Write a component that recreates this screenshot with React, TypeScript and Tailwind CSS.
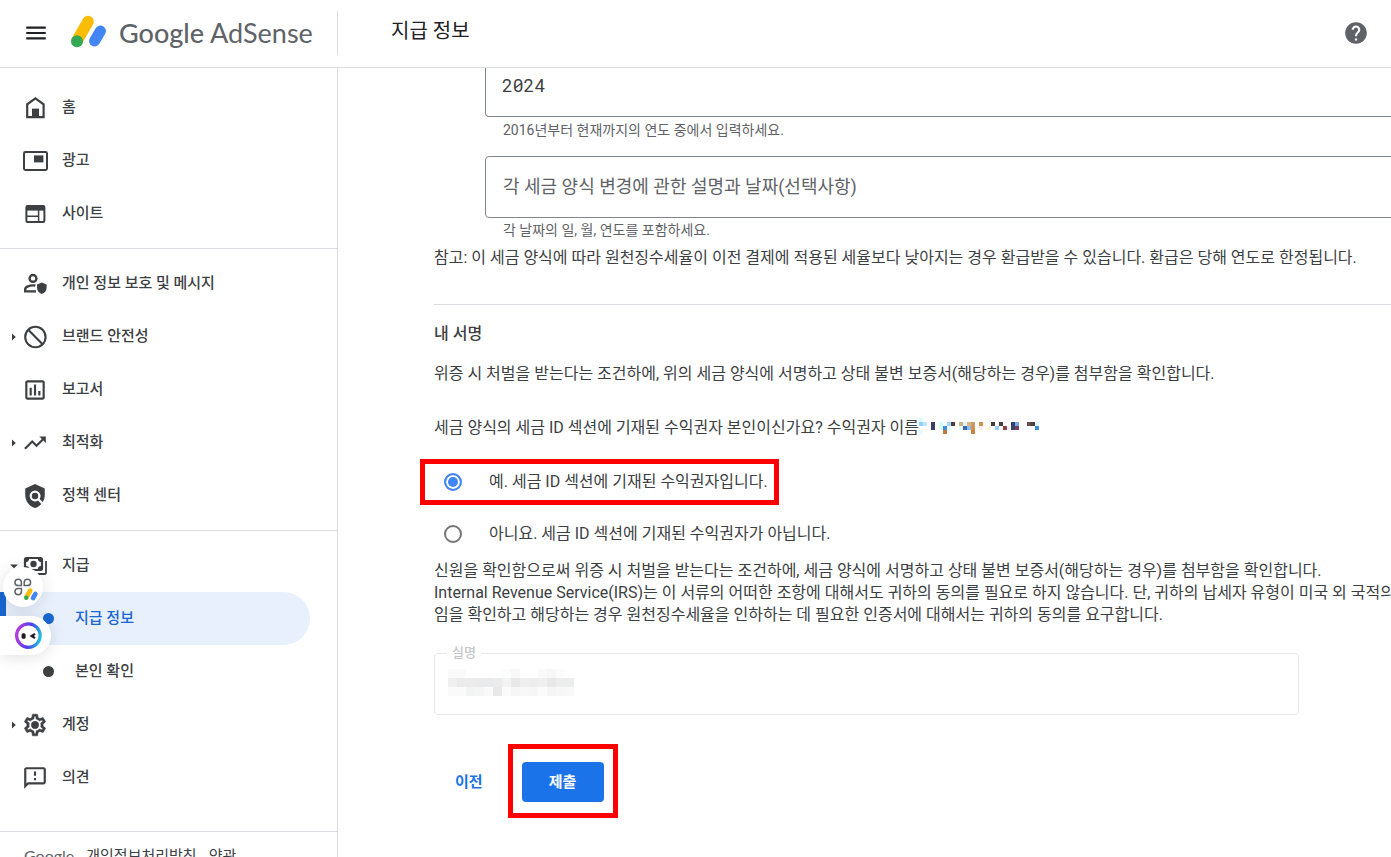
import React from 'react';
import { MdHelp, MdMenu, MdOutlineFeedback, MdOutlineInsertChart, MdPolicy, MdTrendingUp } from 'react-icons/md';

const HomeIcon = () => (
  <svg width="26" height="26" viewBox="0 0 26 26" fill="none" stroke="currentColor" strokeWidth="2.2">
    <path d="M5.2 22.2V9.4l8.2-6 8.2 6v12.8z" />
    <path d="M10 13.6h7v8.6h-7z" fill="currentColor" stroke="none" />
  </svg>
);

const AdsIcon = () => (
  <svg width="26" height="26" viewBox="0 0 26 26" fill="none" stroke="currentColor" strokeWidth="2">
    <rect x="2" y="4" width="23" height="18" rx="1.4" />
    <path d="M12 7.4h9.4v7H12z" fill="currentColor" stroke="none" />
  </svg>
);

const SitesIcon = () => (
  <svg width="26" height="26" viewBox="0 0 26 26" fill="none" stroke="currentColor" strokeWidth="2">
    <rect x="4.4" y="5" width="18" height="16" rx="1.2" />
    <path d="M4.4 5h18v4.6h-18z" fill="currentColor" stroke="none" />
    <path d="M4.4 15.2h12M16.6 9v12" strokeWidth="1.5" />
  </svg>
);

const PrivacyIcon = () => (
  <svg width="26" height="26" viewBox="0 0 26 26" fill="none" stroke="currentColor" strokeWidth="2.4">
    <circle cx="11" cy="7.4" r="3.4" />
    <path d="M14 20.4H3.2v-2.2c0-2.4 4.8-3.8 7.8-3.8 1 0 1.8.1 2.4.3" />
    <path d="M19.8 11.4l4.8 2v3.4c0 3-2 5.4-4.8 6.2-2.8-.8-4.8-3.2-4.8-6.2v-3.4z" fill="currentColor" stroke="none" />
  </svg>
);

const BlockIcon = () => (
  <svg width="26" height="26" viewBox="0 0 26 26" fill="none" stroke="currentColor" strokeWidth="2.1">
    <circle cx="13.4" cy="13" r="10.2" />
    <path d="M6.2 5.8l14.4 14.4" />
  </svg>
);

const PaymentsIcon = () => (
  <svg width="26" height="26" viewBox="0 0 26 26" fill="none" stroke="currentColor" strokeWidth="2.2">
    <rect x="3" y="5" width="17" height="12" rx="1.4" />
    <path d="M3 5h4.4A4.4 4.4 0 0 1 3 9.2zM20 5v4.2A4.4 4.4 0 0 1 15.6 5zM3 17v-4.2A4.4 4.4 0 0 1 7.4 17zM20 17h-4.4a4.4 4.4 0 0 1 4.4-4.2z" fill="currentColor" stroke="none" />
    <circle cx="11.5" cy="11" r="3.2" fill="currentColor" stroke="none" />
    <path d="M24 8v11.4c0 .9-.7 1.6-1.6 1.6H6" strokeWidth="1.8" />
  </svg>
);

const SettingsIcon = () => (
  <svg width="26" height="26" viewBox="0 0 24 24" fill="currentColor" stroke="currentColor" strokeWidth="0.5">
    <path d="M19.43 12.98c.04-.32.07-.64.07-.98s-.03-.66-.07-.98l2.11-1.65c.19-.15.24-.42.12-.64l-2-3.46c-.12-.22-.39-.3-.61-.22l-2.49 1c-.52-.4-1.08-.73-1.69-.98l-.38-2.65C14.46 2.18 14.25 2 14 2h-4c-.25 0-.46.18-.49.42l-.38 2.65c-.61.25-1.17.59-1.69.98l-2.49-1c-.23-.09-.49 0-.61.22l-2 3.46c-.13.22-.07.49.12.64l2.11 1.65c-.04.32-.07.65-.07.98s.03.66.07.98l-2.11 1.65c-.19.15-.24.42-.12.64l2 3.46c.12.22.39.3.61.22l2.49-1c.52.4 1.08.73 1.69.98l.38 2.65c.03.24.24.42.49.42h4c.25 0 .46-.18.49-.42l.38-2.65c.61-.25 1.17-.59 1.69-.98l2.49 1c.23.09.49 0 .61-.22l2-3.46c.12-.22.07-.49-.12-.64zm-1.98-1.71c.04.31.05.52.05.73s-.02.43-.05.73l-.14 1.13.89.7 1.08.84-.7 1.21-1.27-.51-1.04-.42-.9.68c-.43.32-.84.56-1.25.73l-1.06.43-.16 1.13-.2 1.35h-1.4l-.19-1.35-.16-1.13-1.06-.43c-.43-.18-.83-.41-1.23-.71l-.91-.7-1.06.43-1.27.51-.7-1.21 1.08-.84.89-.7-.14-1.13c-.03-.31-.05-.54-.05-.74s.02-.43.05-.73l.14-1.13-.89-.7-1.08-.84.7-1.21 1.27.51 1.04.42.9-.68c.43-.32.84-.56 1.25-.73l1.06-.43.16-1.13.2-1.35h1.39l.19 1.35.16 1.13 1.06.43c.43.18.83.41 1.23.71l.91.7 1.06-.43 1.27-.51.7 1.21-1.07.85-.89.7z" />
    <circle cx="12" cy="12" r="3.4" />
  </svg>
);

type NavItem = {
  label: string;
  icon?: React.ReactNode;
  caret?: 'right' | 'down';
  sub?: boolean;
  active?: boolean;
};

const navGroups: NavItem[][] = [
  [
    { label: '홈', icon: <HomeIcon /> },
    { label: '광고', icon: <AdsIcon /> },
    { label: '사이트', icon: <SitesIcon /> },
  ],
  [
    { label: '개인 정보 보호 및 메시지', icon: <PrivacyIcon /> },
    { label: '브랜드 안전성', icon: <BlockIcon />, caret: 'right' },
    { label: '보고서', icon: <MdOutlineInsertChart size={26} /> },
    { label: '최적화', icon: <MdTrendingUp size={26} />, caret: 'right' },
    { label: '정책 센터', icon: <MdPolicy size={26} /> },
  ],
  [
    { label: '지급', icon: <PaymentsIcon />, caret: 'down' },
    { label: '지급 정보', sub: true, active: true },
    { label: '본인 확인', sub: true },
    { label: '계정', icon: <SettingsIcon />, caret: 'right' },
    { label: '의견', icon: <MdOutlineFeedback size={26} /> },
  ],
];

// [column, row, colour] on a 4px grid
const nameBlocks: [number, number, string][] = [
  [0, 0, '#d8fbff'], [0, 1, '#99ccff'], [1, 1, '#b9e6ff'], [0, 3, '#e4fcff'],
  [3, 1, '#3b3f6e'], [3, 2, '#3b3f6e'], [5, 1, '#ccfdff'], [5, 2, '#d8fdff'],
  [6, 2, '#3d8fd1'], [6, 3, '#c1783f'], [7, 1, '#a6d4ff'], [8, 1, '#4b4040'], [7, 2, '#e4fcff'],
  [10, 1, '#cdb383'], [11, 1, '#d9f4ff'], [12, 1, '#e3b384'], [13, 1, '#c69c6d'],
  [10, 2, '#e4fcff'], [11, 2, '#3868b0'], [12, 2, '#8abef5'], [13, 2, '#d1934a'], [13, 3, '#c98442'],
  [15, 1, '#d1934a'], [15, 2, '#fbeff0'], [17, 2, '#ffffe0'], [18, 1, '#433c44'], [19, 2, '#99ccff'],
  [20, 1, '#4b4040'], [21, 2, '#93404f'], [23, 1, '#3b3f6e'], [24, 1, '#72a9ef'],
  [23, 2, '#3b3f6e'], [24, 2, '#74405c'], [27, 1, '#6c4a4c'], [28, 1, '#4b4040'],
  [29, 1, '#dff9ff'], [29, 2, '#3d8fd1'],
];

const signatureRows = [
  ['#fafafa', '#fafafa', '#fff', '#fff', '#fff', '#fff', '#fbfdfc', '#f8f8f8', '#fff', '#fff', '#fafafa', '#f7f7f7', '#fcfcfc', '#fff'],
  ['#efefef', '#ebebeb', '#ebebeb', '#e9eaeb', '#e9eaeb', '#ebedec', '#f3f3f3', '#e8e8e8', '#efefef', '#ededed', '#efefef', '#e8e8e8', '#ededed', '#eceeed'],
  ['#fafafa', '#fafafa', '#f2f4f3', '#f5f5f5', '#fafafa', '#e7e8ea', '#fafafa', '#f6f6f6', '#f8f8f8', '#f6f6f6', '#fafafa', '#f5f5f5', '#f7f7f7', '#f8f8f8'],
];

const Caret = ({ dir }: { dir?: 'right' | 'down' }) => (
  <svg width="8" height="8" viewBox="0 0 8 8" fill="currentColor" className="shrink-0">
    {dir === 'right' && <path d="M2 0.4L5.8 4 2 7.6z" />}
    {dir === 'down' && <path d="M0 2.4h8L4 6.2z" />}
  </svg>
);

const Logo = () => (
  <a href="#home" className="flex items-center gap-3 text-[#5f6368]">
    <svg width="38" height="38" viewBox="0 0 38 38" fill="none" strokeLinecap="round" strokeWidth="11.6">
      <path d="M19 7.6L8.2 26.4" stroke="#fbbc04" />
      <path d="M31.4 17L25.6 27" stroke="#4285f4" strokeWidth="11" />
      <circle cx="8" cy="27.2" r="6" fill="#34a853" />
    </svg>
    <span className="text-[27px] leading-9 font-[Lato,sans-serif]">
      <span className="font-medium">Google</span> AdSense
    </span>
  </a>
);

const Sidebar = () => (
  <aside className="w-[338px] shrink-0 border-r border-[#dadce0] overflow-hidden">
    <nav className="pt-[5px]">
      {navGroups.map((group, i) => (
        <div key={i} className={i < 2 ? 'py-2 border-b border-[#dadce0]' : 'pt-2 pb-[27px]'}>
          {group.map((item) => (
            <a
              key={item.label}
              href="#nav"
              className={
                item.active
                  ? 'flex items-center h-[53px] mr-[27px] rounded-r-full bg-[#e8f0fe] border-l-6 border-[#1967d2] pl-[37px] text-[#1967d2]'
                  : item.sub
                    ? 'flex items-center h-[53px] pl-[43px]'
                    : 'flex items-center h-[53px] pl-[10px] gap-1'
              }
            >
              {item.sub ? (
                <span className="size-[11px] rounded-full bg-current mr-[21px]" />
              ) : (
                <>
                  <Caret dir={item.caret} />
                  <span className="w-9 shrink-0">{item.icon}</span>
                </>
              )}
              <span className="pb-[2px] text-[15px] leading-5 font-medium">{item.label}</span>
            </a>
          ))}
        </div>
      ))}
    </nav>
    <footer className="flex items-center gap-3 border-t border-[#dadce0] pl-6 pt-[14px] text-[15px] leading-5 text-[#3c4043] whitespace-nowrap">
      <span className="text-[16px] text-[#5f6368] font-[Lato,sans-serif]">Google</span>
      <a href="#privacy">개인정보처리방침</a>
      <a href="#terms">약관</a>
    </footer>
  </aside>
);

const FloatingWidgets = () => (
  <div className="absolute left-0 top-[567px] w-[51px]">
    <button
      aria-label="앱 바로가기"
      className="block ml-[3px] size-10 rounded-full bg-white shadow-[0_2px_16px_rgba(0,0,0,0.12)]"
    >
      <svg width="40" height="40" viewBox="0 0 40 40" fill="none" stroke="#5f6368" strokeWidth="1.5">
        <path d="M18.4 18.6h-3.2a3.2 3.2 0 1 1 3.2-3.2z" />
        <path d="M21.2 18.6v-3.2a3.2 3.2 0 1 1 3.2 3.2z" />
        <path d="M18.4 21.4v3.2a3.2 3.2 0 1 1-3.2-3.2z" />
        <g strokeLinecap="round" strokeWidth="4.6">
          <path d="M27.2 23.6L23.6 30" stroke="#fbbc04" />
          <path d="M32.4 27L30 31" stroke="#4285f4" />
        </g>
        <circle cx="23.2" cy="30.8" r="2.2" fill="#34a853" stroke="none" />
      </svg>
    </button>
    <button
      aria-label="도우미"
      className="block mt-[9px] w-full h-[39px] rounded-r-[20px] bg-white shadow-[0_2px_16px_rgba(0,0,0,0.12)]"
    >
      <svg width="51" height="39" viewBox="0 0 51 39" fill="none">
        <defs>
          <linearGradient id="ring" x1="0" y1="0.6" x2="1" y2="0.8">
            <stop offset="0" stopColor="#b03be0" />
            <stop offset="0.5" stopColor="#4b3cf0" />
            <stop offset="1" stopColor="#22c5dc" />
          </linearGradient>
        </defs>
        <circle cx="28.4" cy="19.6" r="11.8" stroke="url(#ring)" strokeWidth="3.2" />
        <rect x="21.6" y="17.2" width="4" height="5.6" rx="1.6" fill="#1c1c22" />
        <path d="M35 17.8L31.6 20l3.4 2.2" stroke="#1c1c22" strokeWidth="2.2" />
      </svg>
    </button>
  </div>
);

const radioClass =
  'appearance-none size-[18px] shrink-0 rounded-full border-2 border-[#757575] checked:border-[#4285f4] checked:bg-[#4285f4] checked:shadow-[inset_0_0_0_2px_#fff]';

const SignatureForm = () => (
  <form className="w-[1100px] pl-24 text-[16px] leading-[22px] text-[#3c4043]" onSubmit={(e) => e.preventDefault()}>
    <div className="ml-[51px]">
      <input
        aria-label="연도"
        defaultValue="2024"
        className="block w-full h-[49px] pb-[15px] px-4 rounded-b border border-t-0 border-[#80868b] text-[18px] slashed-zero font-['Roboto_Mono','Noto_Sans',monospace]"
      />
      <p className="mt-[3px] pl-[18px] text-[14px] leading-5 text-[#5f6368]">2016년부터 현재까지의 연도 중에서 입력하세요.</p>
      <input
        aria-label="각 세금 양식 변경에 관한 설명과 날짜"
        placeholder="각 세금 양식 변경에 관한 설명과 날짜(선택사항)"
        className="block mt-4 w-full h-[62px] px-[17px] pb-[2px] rounded border border-[#80868b] text-[18px] placeholder:text-[#5f6368]"
      />
      <p className="mt-[2px] pl-[18px] text-[14px] leading-5 text-[#5f6368]">각 날짜의 일, 월, 연도를 포함하세요.</p>
    </div>
    <p className="mt-[7px]">
      참고: 이 세금 양식에 따라 원천징수세율이 이전 결제에 적용된 세율보다 낮아지는 경우 환급받을 수 있습니다. 환급은 당해 연도로 한정됩니다.
    </p>

    <hr className="mt-[35px] border-[#dadce0]" />
    <h2 className="mt-[18px] font-medium">내 서명</h2>
    <p className="mt-[18px]">
      위증 시 처벌을 받는다는 조건하에, 위의 세금 양식에 서명하고 상태 불변 보증서(해당하는 경우)를 첨부함을 확인합니다.
    </p>

    <fieldset className="mt-8">
      <legend className="flex items-center">
        세금 양식의 세금 ID 섹션에 기재된 수익권자 본인이신가요? 수익권자 이름
        <svg width="120" height="20" viewBox="0 0 120 20" shapeRendering="crispEdges">
          {nameBlocks.map(([x, y, fill], i) => (
            <rect key={i} x={x * 4} y={y * 4} width="4" height="4" fill={fill} />
          ))}
        </svg>
      </legend>
      <div className="pt-[17px]">
        <label className="relative flex items-center gap-[27px] w-fit h-13 pl-[10px]">
          <input type="radio" name="owner" defaultChecked className={radioClass} />
          예. 세금 ID 섹션에 기재된 수익권자입니다.
          <span className="absolute -left-[14px] -right-[11px] inset-y-[3px] border-5 border-[#ff0000] pointer-events-none" />
        </label>
        <label className="flex items-center gap-[27px] w-fit h-13 pl-[10px]">
          <input type="radio" name="owner" className={radioClass} />
          아니요. 세금 ID 섹션에 기재된 수익권자가 아닙니다.
        </label>
      </div>
    </fieldset>

    <p className="whitespace-nowrap">
      신원을 확인함으로써 위증 시 처벌을 받는다는 조건하에, 세금 양식에 서명하고 상태 불변 보증서(해당하는 경우)를 첨부함을 확인합니다.
      <br />
      Internal Revenue Service(IRS)는 이 서류의 어떠한 조항에 대해서도 귀하의 동의를 필요로 하지 않습니다. 단, 귀하의 납세자 유형이 미국 외 국적의 기
      <br />
      임을 확인하고 해당하는 경우 원천징수세율을 인하하는 데 필요한 인증서에 대해서는 귀하의 동의를 요구합니다.
    </p>

    <div className="relative mt-[27px] w-[865px]">
      <input id="real-name" disabled className="block w-full h-[62px] rounded border border-[#e6e7e8]" />
      <label
        htmlFor="real-name"
        className="absolute left-[13px] -top-[10px] px-[5px] bg-white text-[13px] leading-5 font-medium text-[#c4c6c8]"
      >
        실명
      </label>
      <svg width="126" height="27" className="absolute left-[14px] top-4" shapeRendering="crispEdges">
        {signatureRows.map((row, y) =>
          row.map((fill, x) => <rect key={`${x}-${y}`} x={x * 9} y={y * 9} width="9" height="9" fill={fill} />)
        )}
      </svg>
    </div>

    <div className="flex gap-[18px] mt-[47px] text-[15px] font-bold">
      <button type="button" className="h-10 px-[21px] text-[#1a73e8]">
        이전
      </button>
      <div className="relative">
        <button type="submit" className="h-10 w-[82px] rounded bg-[#1a73e8] text-white">
          제출
        </button>
        <span className="absolute -inset-x-[14px] -top-[18px] -bottom-4 border-5 border-[#ff0000] pointer-events-none" />
      </div>
    </div>
  </form>
);

const App: React.FC = () => {
  return (
    <div className="relative flex flex-col h-screen overflow-hidden bg-white text-[#3c4043] font-[Roboto,'Noto_Sans_CJK_KR',sans-serif]">
      <header className="flex items-center h-[68px] shrink-0 border-b border-[#dadce0] pb-[2px]">
        <div className="flex items-center w-[338px] h-11 shrink-0 border-r border-[#dadce0] pl-[23px] gap-5">
          <button aria-label="메뉴" className="text-[#202124]">
            <MdMenu size={26} />
          </button>
          <Logo />
        </div>
        <h1 className="grow pl-[53px] pb-1 text-[20px] leading-7 text-[#202124]">지급 정보</h1>
        <button aria-label="도움말" className="mr-[22px] text-[#5f6368]">
          <MdHelp size={26} />
        </button>
      </header>
      <div className="flex grow min-h-0">
        <Sidebar />
        <main className="grow min-w-0 overflow-hidden">
          <SignatureForm />
        </main>
      </div>
      <FloatingWidgets />
    </div>
  );
};

export default App;
